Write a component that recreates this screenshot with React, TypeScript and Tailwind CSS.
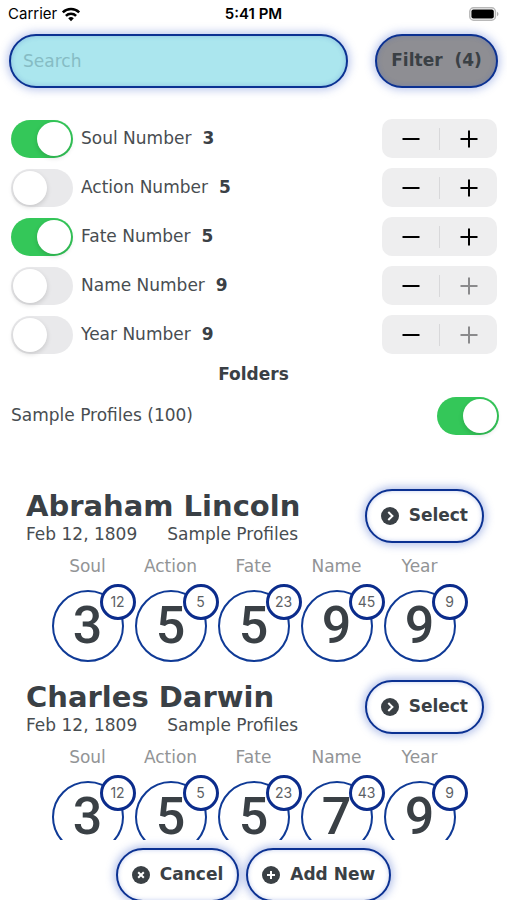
import { useState } from 'react';
import type { ReactNode } from 'react';
import clsx from 'clsx';

interface NumberFilter {
    name:    string;
    value:   number;
    enabled: boolean;
}

interface Profile {
    name:    string;
    date:    string;
    folder:  string;
    numbers: { label: string; value: number; total: number }[];
}

const MAX_VALUE = 9;

const initialFilters: NumberFilter[] = [
    { name: 'Soul', value: 3, enabled: true },
    { name: 'Action', value: 5, enabled: false },
    { name: 'Fate', value: 5, enabled: true },
    { name: 'Name', value: 9, enabled: false },
    { name: 'Year', value: 9, enabled: false },
];

const profiles: Profile[] = [
    {
        name: 'Abraham Lincoln',
        date: 'Feb 12, 1809',
        folder: 'Sample Profiles',
        numbers: [
            { label: 'Soul', value: 3, total: 12 },
            { label: 'Action', value: 5, total: 5 },
            { label: 'Fate', value: 5, total: 23 },
            { label: 'Name', value: 9, total: 45 },
            { label: 'Year', value: 9, total: 9 },
        ],
    },
    {
        name: 'Charles Darwin',
        date: 'Feb 12, 1809',
        folder: 'Sample Profiles',
        numbers: [
            { label: 'Soul', value: 3, total: 12 },
            { label: 'Action', value: 5, total: 5 },
            { label: 'Fate', value: 5, total: 23 },
            { label: 'Name', value: 7, total: 43 },
            { label: 'Year', value: 9, total: 9 },
        ],
    },
];

function StatusBar() {
    return (
        <div className="grid grid-cols-3 items-center px-2 h-7 shrink-0 font-['Inter',sans-serif] text-[15px] text-black">
            <div className="flex items-center gap-1">
                <span>Carrier</span>
                <svg width="20" height="15" viewBox="0 0 20 15" fill="none" stroke="currentColor" strokeWidth="2.5">
                    <path d="M1.8 5.4a11.6 11.6 0 0 1 16.4 0" />
                    <path d="M4.9 8.8a7.2 7.2 0 0 1 10.2 0" />
                    <path d="M10 14.2l-2.8-2.9a4 4 0 0 1 5.6 0z" fill="currentColor" stroke="none" />
                </svg>
            </div>
            <span className="text-center font-semibold">5:41 PM</span>
            <svg className="justify-self-end" width="30" height="14" viewBox="0 0 30 14">
                <rect x="0.8" y="0.8" width="25.6" height="12.4" rx="3.8" fill="#fff" stroke="#b8b8b8" strokeWidth="1.5" />
                <rect x="2.4" y="2.4" width="22.4" height="9.2" rx="2" fill="#000" />
                <path d="M28 4.8c2 .8 2 3.6 0 4.4z" fill="#b0b0b0" />
            </svg>
        </div>
    );
}

function Toggle({ id, checked, onChange }: { id: string; checked: boolean; onChange: () => void }) {
    return (
        <input
            id={id}
            type="checkbox"
            role="switch"
            checked={checked}
            onChange={onChange}
            className="appearance-none shrink-0 w-[62px] h-[38px] p-0.5 rounded-full bg-[#e9e9eb] checked:bg-[#34c759] before:block before:size-[34px] before:rounded-full before:bg-white before:shadow-[0_2px_5px_rgba(0,0,0,0.15)] checked:before:translate-x-6"
        />
    );
}

function Stepper({ name, value, onStep }: { name: string; value: number; onStep: (by: number) => void }) {
    return (
        <div className="flex items-center w-[115px] h-[39px] rounded-[10px] bg-[#eeeeef] text-black">
            <button
                type="button"
                aria-label={`Decrease ${name}`}
                disabled={value <= 1}
                onClick={() => onStep(-1)}
                className="flex flex-1 h-full items-center justify-center disabled:text-[#8a8a8c]"
            >
                <svg width="18" height="18" viewBox="0 0 18 18" stroke="currentColor" strokeWidth="2">
                    <path d="M0.5 9h17" />
                </svg>
            </button>
            <div className="w-px h-[22px] bg-[#d8d8da]" />
            <button
                type="button"
                aria-label={`Increase ${name}`}
                disabled={value >= MAX_VALUE}
                onClick={() => onStep(1)}
                className="flex flex-1 h-full items-center justify-center disabled:text-[#8a8a8c]"
            >
                <svg width="18" height="18" viewBox="0 0 18 18" stroke="currentColor" strokeWidth="2">
                    <path d="M0.5 9h17M9 0.5v17" />
                </svg>
            </button>
        </div>
    );
}

const iconPaths = {
    chevron: 'M7.3 5l4.1 4-4.1 4',
    close:   'M6.2 6.2l5.6 5.6M11.8 6.2l-5.6 5.6',
    plus:    'M9 5v8M5 9h8',
};

function PillButton({ icon, children }: { icon: keyof typeof iconPaths; children: ReactNode }) {
    return (
        <button
            type="button"
            className="flex shrink-0 items-center gap-[10px] h-[54px] px-[14px] rounded-full border-2 border-[#0b3192] bg-white font-bold text-[#3a4045] shadow-[0_0_8px_2px_rgba(60,95,200,0.4),inset_0_0_4px_rgba(60,95,200,0.3)]"
        >
            <svg width="18" height="18" viewBox="0 0 18 18">
                <circle cx="9" cy="9" r="9" fill="#3a4045" />
                <path d={iconPaths[icon]} fill="none" stroke="#fff" strokeWidth="2" />
            </svg>
            {children}
        </button>
    );
}

function ProfileCard({ profile }: { profile: Profile }) {
    return (
        <article>
            <div className="flex items-start justify-between pl-[26px] pr-[23px]">
                <div>
                    <h2 className="text-[29px] leading-[34px] font-bold text-[#3a4045]">{profile.name}</h2>
                    <p className="flex gap-[30px] leading-[22px]">
                        <span>{profile.date}</span>
                        <span>{profile.folder}</span>
                    </p>
                </div>
                <PillButton icon="chevron">Select</PillButton>
            </div>
            <div className="flex justify-center gap-[11px] pt-[9px]">
                {profile.numbers.map((n) => (
                    <div key={n.label} className="flex flex-col items-center w-[72px] gap-3">
                        <span className="text-[#929496] leading-6">{n.label}</span>
                        <div className="relative flex items-center justify-center size-[72px] rounded-full border-2 border-[#0f3a96]">
                            <span className="font-['Roboto',sans-serif] font-medium text-[52px] leading-none text-[#3a4045]">{n.value}</span>
                            <span className="absolute -top-2 -right-[14px] flex items-center justify-center size-9 rounded-full border-[3px] border-[#0b2c8c] bg-white font-['Inter',sans-serif] text-sm text-[#5c6064]">
                                {n.total}
                            </span>
                        </div>
                    </div>
                ))}
            </div>
        </article>
    );
}

export default function App() {
    const [filters, setFilters] = useState(initialFilters);
    const [folderOn, setFolderOn] = useState(true);
    const [search, setSearch] = useState('');

    const update = (index: number, patch: Partial<NumberFilter>) =>
        setFilters(filters.map((f, i) => (i === index ? { ...f, ...patch } : f)));

    return (
        <div className="flex flex-col h-screen overflow-hidden bg-white font-['DejaVu_Sans',sans-serif] text-[17px] text-[#484d51]">
            <StatusBar />

            <div className="flex gap-[27px] px-[9px] pt-[6px]">
                <input
                    type="search"
                    aria-label="Search"
                    placeholder="Search"
                    value={search}
                    onChange={(e) => setSearch(e.target.value)}
                    className="flex-1 min-w-0 h-[54px] px-3 rounded-full border-2 border-[#0b3192] bg-[#abe6ee] placeholder:text-[#86bcc4] outline-none shadow-[0_0_8px_2px_rgba(60,95,200,0.35),inset_0_0_5px_rgba(60,95,200,0.3)]"
                />
                <button
                    type="button"
                    className="w-[123px] h-[54px] rounded-full border-2 border-[#0b3192] bg-[#8e8e93] font-bold whitespace-pre text-[#3a4045] shadow-[0_0_8px_2px_rgba(60,95,200,0.35),inset_0_0_5px_rgba(60,95,200,0.3)]"
                >
                    {'Filter  (4)'}
                </button>
            </div>

            <div className="flex flex-col gap-[10px] pl-[11px] pr-[10px] pt-[31px]">
                {filters.map((f, i) => (
                    <div key={f.name} className="flex items-center justify-between">
                        <div className="flex items-center gap-2">
                            <Toggle id={f.name} checked={f.enabled} onChange={() => update(i, { enabled: !f.enabled })} />
                            <label htmlFor={f.name} className="flex gap-[11px]">
                                {f.name} Number <b className="text-[#3a4045]">{f.value}</b>
                            </label>
                        </div>
                        <Stepper
                            name={`${f.name} Number`}
                            value={f.value}
                            onStep={(by) => update(i, { value: f.value + by })}
                        />
                    </div>
                ))}
            </div>

            <h3 className="pt-2 text-center font-bold leading-6 text-[#3a4045]">Folders</h3>
            <div className="flex items-center justify-between pl-[11px] pr-2 pt-[11px]">
                <label htmlFor="folder">Sample Profiles (100)</label>
                <Toggle id="folder" checked={folderOn} onChange={() => setFolderOn(!folderOn)} />
            </div>

            <main className={clsx('flex flex-col flex-1 min-h-0 mt-5 pt-[34px] gap-[18px] overflow-hidden', !folderOn && 'invisible')}>
                {profiles.map((p) => (
                    <ProfileCard key={p.name} profile={p} />
                ))}
            </main>

            <footer className="flex justify-center items-start gap-[7px] h-15 pt-2 shrink-0">
                <PillButton icon="close">Cancel</PillButton>
                <PillButton icon="plus">Add New</PillButton>
            </footer>
        </div>
    );
}
